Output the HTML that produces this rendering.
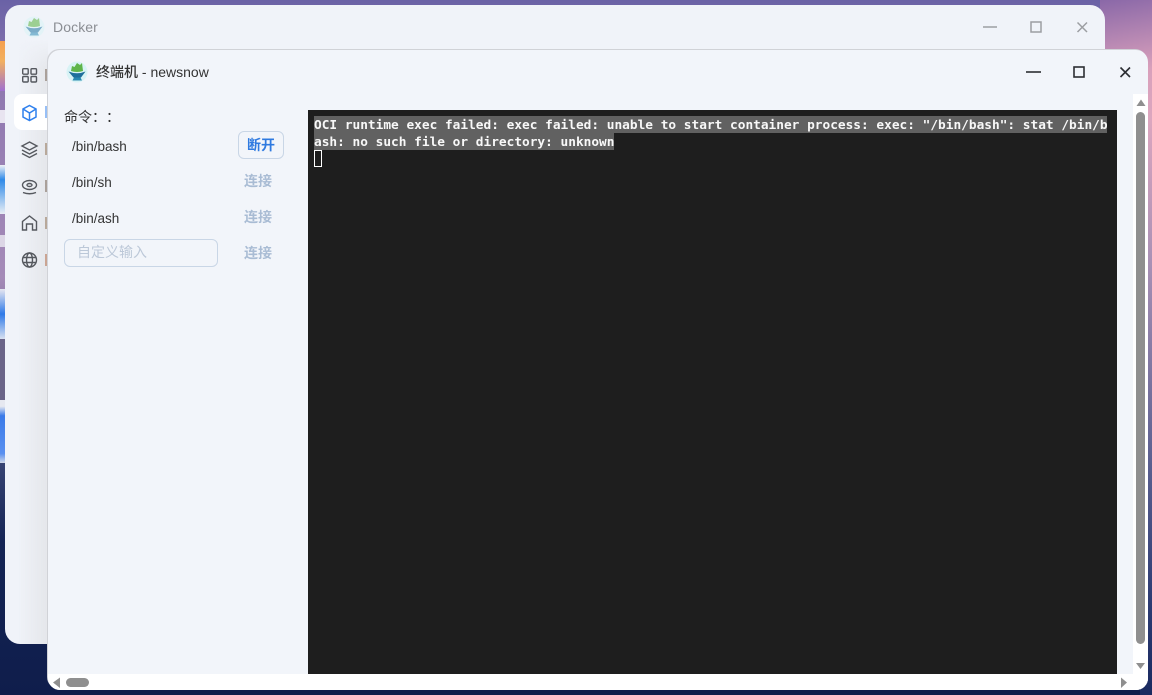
<!DOCTYPE html>
<html><head><meta charset="utf-8"><style>
html,body{margin:0;padding:0}
body{width:1152px;height:695px;overflow:hidden;position:relative;font-family:"Liberation Sans","Noto Sans CJK SC",sans-serif;background:#0f1d4b;text-spacing-trim:space-all}
.a{position:absolute}
#bg{left:0;top:0;width:1152px;height:695px;background:linear-gradient(180deg,#6a62a6 0,#8f78b0 12%,#a58bb8 40%,#6f6690 50%,#45507f 62%,#142455 78%,#0f1d4b 100%)}
#bgr{left:1100px;top:0;width:52px;height:120px;background:linear-gradient(170deg,#8a68a8 0,#d9a0bb 60%,#dca6bf 100%)}
#bgb{left:1140px;top:120px;width:12px;height:575px;background:linear-gradient(180deg,#dca6bf 0,#a890b5 25%,#5a5f90 60%,#2b3a72 85%,#1a2a60 100%)}
.w1{left:5px;top:5px;width:1100px;height:639px;background:#f0f3f9;border-radius:15px}
.sh{left:18px;top:40px;width:30px;height:604px;background:linear-gradient(90deg,rgba(228,230,236,0),#e4e6ea);-webkit-mask-image:linear-gradient(180deg,transparent 0,#000 30px);mask-image:linear-gradient(180deg,transparent 0,#000 30px)}
.w2{left:48px;top:50px;width:1100px;height:640px;background:#f2f5fa;border-radius:12px;box-shadow:-1px -1px 0 #d0d2d7;overflow:hidden}
.t{color:#333;font-size:13.500px;line-height:20px;white-space:nowrap}
.c{color:#a9bcd4;font-weight:700;font-size:14px;line-height:20px;white-space:nowrap}
</style></head><body>
<div class="a" id="bg"></div><div class="a" id="bgr"></div><div class="a" id="bgb"></div>
<div class="a" style="left:0;top:41px;width:5px;height:50px;background:linear-gradient(180deg,#f5a050,#f2b060 40%,#a070d0)"></div>
<div class="a" style="left:0;top:110px;width:5px;height:13px;background:#e8e4f0"></div>
<div class="a" style="left:0;top:165px;width:5px;height:49px;background:linear-gradient(180deg,#f0f0f5,#2f8ae8 30%,#e8eef5)"></div>
<div class="a" style="left:0;top:235px;width:5px;height:12px;background:#dcd6e6"></div>
<div class="a" style="left:0;top:289px;width:5px;height:50px;background:linear-gradient(180deg,#e6e6f0,#2f7ae8 50%,#d8e0f0)"></div>
<div class="a" style="left:0;top:339px;width:5px;height:61px;background:#6a6488"></div>
<div class="a" style="left:0;top:400px;width:5px;height:63px;background:linear-gradient(180deg,#e6e8f0,#e6e8f0 10%,#3a7ae8 25%,#5a90f0 85%,#d0d8e8)"></div>

<div class="a w1"></div>
<div class="a sh"></div>
<svg class="a" style="left:23px;top:16px;opacity:.6" width="22" height="22" viewBox="0 0 22 22"><circle cx="11" cy="11" r="10.500" fill="#dcf3f6"/><path d="M2.500 10.500Q11 14 19.500 10.500L15 16.500H7.500Z" fill="#2f7ea8"/><path d="M5 10L6 5 8.500 6 11 2 14 4 16 2 17 10Q11 12 5 10Z" fill="#66b84e"/><path d="M8 16.500H14.500L16 19.500H6.500Z" fill="#3b93bb"/></svg>
<div class="a" style="left:53px;top:19px;font-size:14px;color:#8b8e94;letter-spacing:.1px">Docker</div>
<svg class="a" style="left:975px;top:15px" width="120" height="24" fill="none" stroke="#9c9ea2" stroke-width="1.500"><path d="M8 12H22"/><rect x="56" y="7" width="10" height="10"/><path d="M102.500 7.500L112 17M112 7.500L102.500 17"/></svg>

<div class="a" style="left:14px;top:94px;width:40px;height:36px;background:#fff;border-radius:8px"></div>
<svg class="a" style="left:20px;top:65px" width="20" height="210" fill="none" stroke="#55585e" stroke-width="1.400">
<rect x="2.700" y="3.700" width="5.500" height="5.500" rx="1"/><rect x="11" y="3.700" width="5.500" height="5.500" rx="1"/><rect x="2.700" y="11.500" width="5.500" height="5.500" rx="1"/><rect x="11" y="11.500" width="5.500" height="5.500" rx="1"/>
<g stroke="#2f80ed" stroke-width="1.500"><path d="M9.500 40.500L16 44V52L9.500 55.500 3 52V44Z"/><path d="M3 44L9.500 48 16 44M9.500 48V55.500"/></g>
<path d="M9.500 77L17 81 9.500 85 2 81Z"/><path d="M2 85L9.500 89 17 85M2 88.500L9.500 92.500 17 88.500"/>
<ellipse cx="9.500" cy="120" rx="7" ry="4.500"/><ellipse cx="9.500" cy="120" rx="2.500" ry="1.500"/><path d="M3 127.500Q9.500 130 16 127.500"/>
<path d="M2.500 164V156.500L9.500 151 16.500 156.500V165H12.500V159H6.500V165H2.500Z"/>
<circle cx="9.500" cy="195" r="7"/><ellipse cx="9.500" cy="195" rx="3" ry="7"/><path d="M2.500 192.500H16.500M2.500 197.500H16.500"/>
</svg>
<div class="a" style="left:45px;top:69px;width:3px;height:12px;background:#6d5a48;opacity:.5"></div>
<div class="a" style="left:45px;top:106px;width:3px;height:12px;background:#2f80ed;opacity:.5"></div>
<div class="a" style="left:45px;top:143px;width:3px;height:12px;background:#8a6a48;opacity:.5"></div>
<div class="a" style="left:45px;top:180px;width:3px;height:12px;background:#6d5a48;opacity:.5"></div>
<div class="a" style="left:45px;top:217px;width:3px;height:12px;background:#8a6a48;opacity:.5"></div>
<div class="a" style="left:45px;top:254px;width:3px;height:12px;background:#b0623a;opacity:.5"></div>

<div class="a w2"></div>
<svg class="a" style="left:66px;top:61px" width="22" height="22" viewBox="0 0 22 22"><circle cx="11" cy="11" r="10.500" fill="#d8f3f5"/><path d="M2.500 10.500Q11 14 19.500 10.500L15 16.500H7.500Z" fill="#1f6f9c"/><path d="M5 10L6 5 8.500 6 11 2 14 4 16 2 17 10Q11 12 5 10Z" fill="#5fb54a"/><path d="M8 16.500H14.500L16 19.500H6.500Z" fill="#2a88b0"/></svg>
<div class="a" style="left:96px;top:62px;font-size:14px;line-height:20px;color:#333;white-space:nowrap;font-weight:500">终端机 - newsnow</div>
<svg class="a" style="left:1020px;top:60px" width="120" height="24" fill="none" stroke="#2c2e33" stroke-width="1.600"><path d="M6 12H21"/><rect x="54" y="7" width="10" height="10"/><path d="M100.500 7.500L110 17M110 7.500L100.500 17"/></svg>

<div class="a t" style="left:64px;top:107px;font-size:14px">命令：：</div>
<div class="a t" style="left:72px;top:137px">/bin/bash</div>
<div class="a t" style="left:72px;top:173px">/bin/sh</div>
<div class="a t" style="left:72px;top:209px">/bin/ash</div>
<div class="a" style="left:238px;top:131px;width:44px;height:26px;border:1px solid #c9d6e6;border-radius:6px;text-align:center;line-height:26px;color:#2f7ae0;font-weight:700;font-size:14px">断开</div>
<div class="a c" style="left:244px;top:171px">连接</div>
<div class="a c" style="left:244px;top:207px">连接</div>
<div class="a c" style="left:244px;top:243px">连接</div>
<div class="a" style="left:64px;top:239px;width:152px;height:26px;border:1px solid #c9d6e6;border-radius:6px;line-height:25px;color:#bcc8d8;font-size:14px;text-indent:12px">自定义输入</div>

<div class="a" style="left:308px;top:110px;width:809px;height:564px;background:#1e1e1e"></div>
<div class="a" style="left:314px;top:116px;width:793px;height:17px;background:#616161"></div>
<div class="a" style="left:314px;top:133px;width:300px;height:17px;background:#616161"></div>
<pre class="a" style="margin:0;left:314px;top:117px;font:700 12.800px/17px 'DejaVu Sans Mono',monospace;color:#f8f8f8">OCI runtime exec failed: exec failed: unable to start container process: exec: "/bin/bash": stat /bin/b
ash: no such file or directory: unknown</pre>
<div class="a" style="left:314px;top:150px;width:6px;height:15px;border:1px solid #fff"></div>

<div class="a" style="left:1133px;top:94px;width:15px;height:596px;background:#fff;border-radius:0 0 12px 0"></div>
<div class="a" style="left:48px;top:674px;width:1100px;height:16px;background:#fff;border-radius:0 0 12px 12px"></div>
<div class="a" style="left:1136px;top:112px;width:9px;height:532px;background:#8f8f8f;border-radius:5px"></div>
<div class="a" style="left:66px;top:678px;width:23px;height:9px;background:#8f8f8f;border-radius:5px"></div>
<svg class="a" style="left:0;top:0" width="1152" height="695" fill="#8f8f8f"><path d="M1141 99.500L1145.500 106H1136.500ZM1140.500 669L1145 663H1136ZM53 682.500L60 677.500V688ZM1127 682.500L1121 677.500V688Z"/></svg>
</body></html>
